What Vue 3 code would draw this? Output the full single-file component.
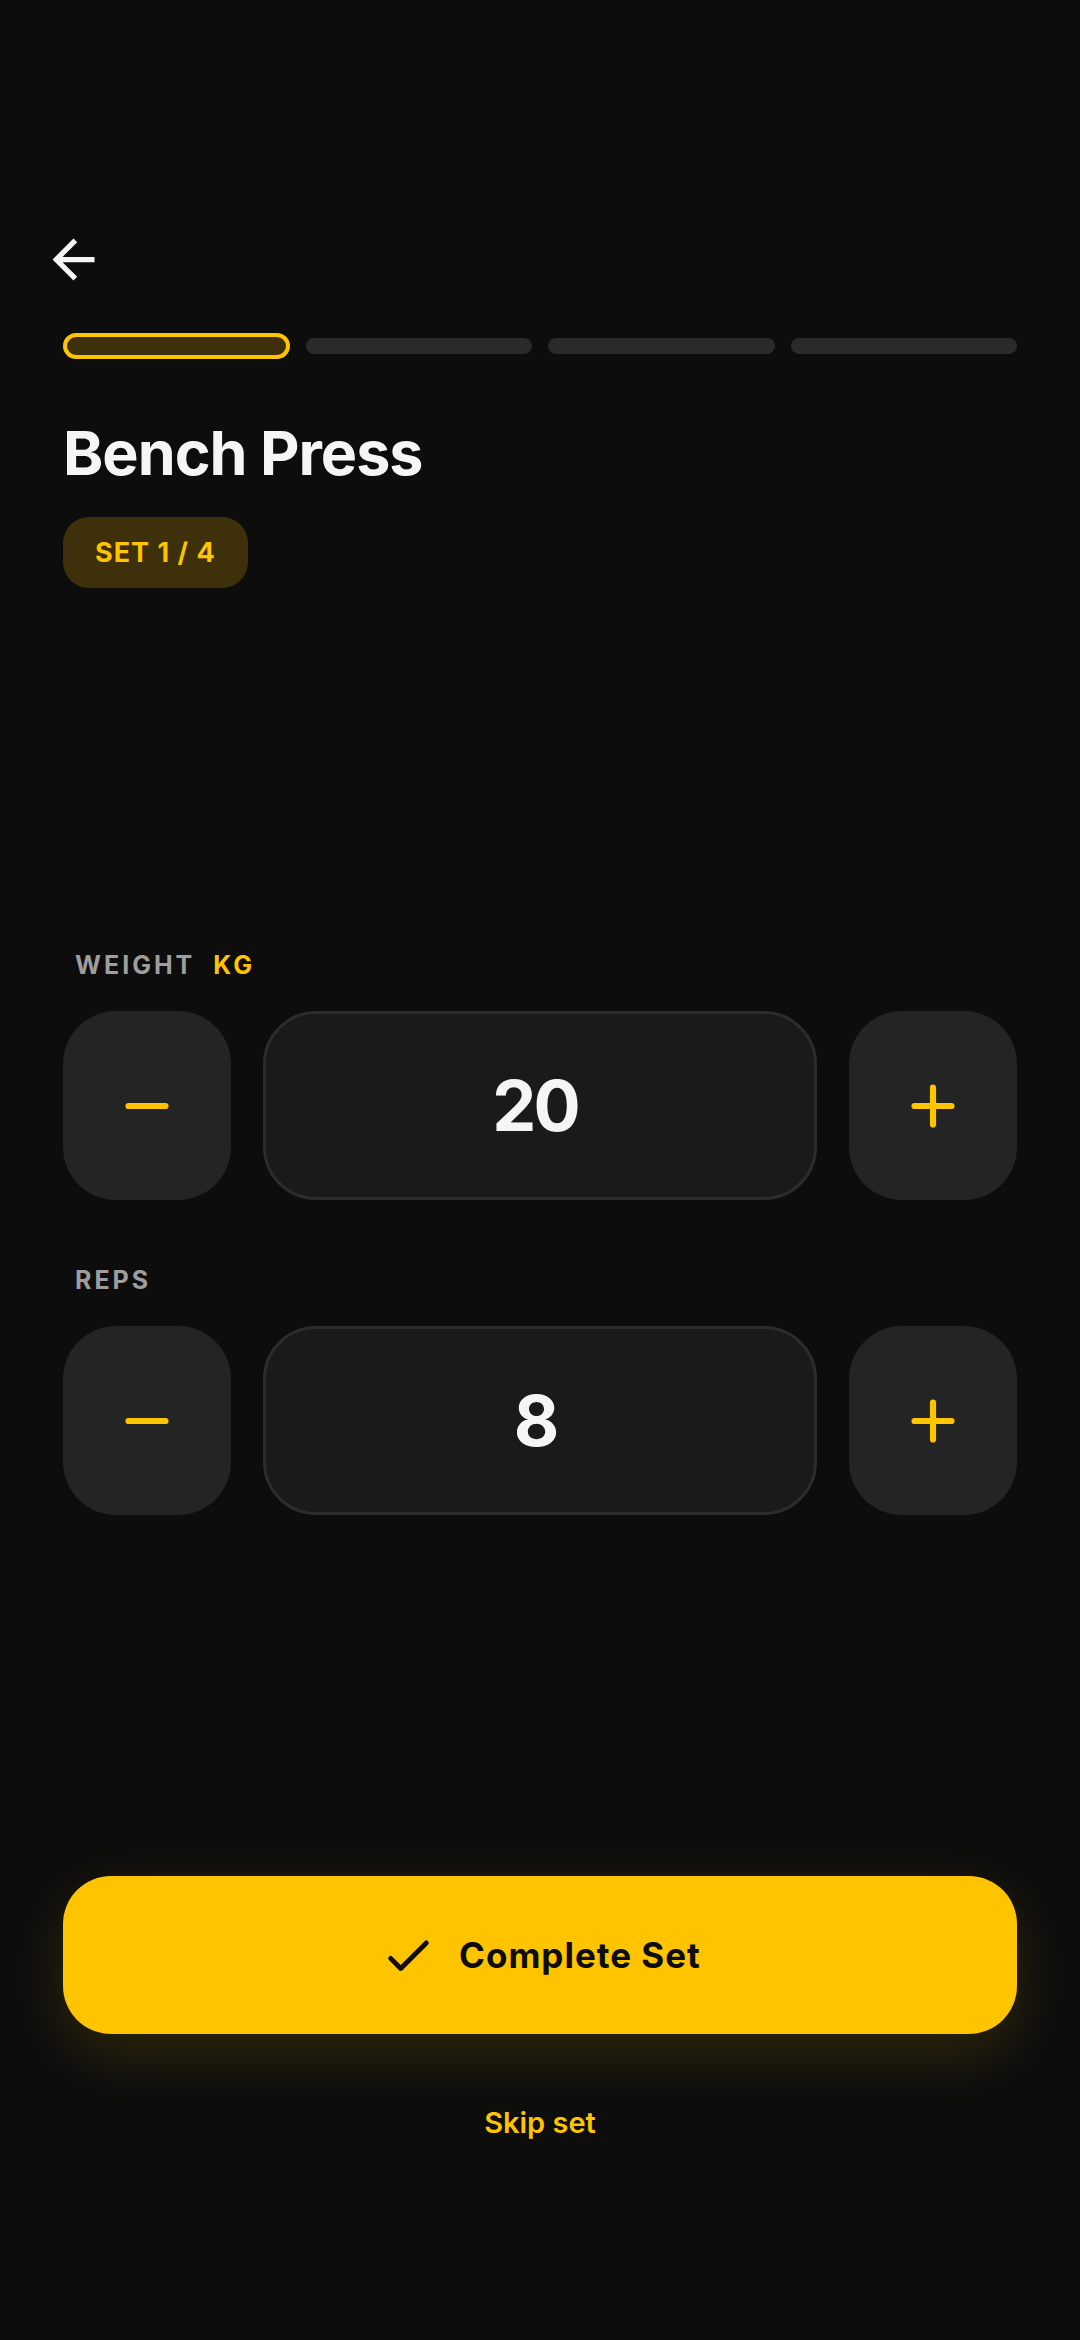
<script setup>
import { ref, reactive } from 'vue'

const totalSets = 4
const currentSet = ref(1)
const fields = reactive([
  { id: 'weight', label: 'WEIGHT', unit: 'KG', value: 20, step: 5 },
  { id: 'reps', label: 'REPS', unit: '', value: 8, step: 1 }
])

function change(field, direction) {
  field.value = Math.max(0, Number(field.value) + direction * field.step)
}

function nextSet() {
  if (currentSet.value < totalSets) currentSet.value++
}
</script>

<template>
  <div class="screen">
    <header>
      <button class="back" type="button" aria-label="Back">
        <svg viewBox="0 0 24 24" aria-hidden="true">
          <path d="M20 11H7.83l5.59-5.59L12 4l-8 8 8 8 1.41-1.41L7.83 13H20z" />
        </svg>
      </button>
      <div class="progress" aria-hidden="true">
        <span
          v-for="n in totalSets"
          :key="n"
          class="segment"
          :class="{ active: n === currentSet }"
        ></span>
      </div>
      <h1>Bench Press</h1>
      <p class="badge">SET {{ currentSet }} / {{ totalSets }}</p>
    </header>

    <main>
      <section v-for="field in fields" :key="field.id" class="field">
        <label :for="field.id">
          <span>{{ field.label }}</span>
          <span v-if="field.unit" class="unit">{{ field.unit }}</span>
        </label>
        <div class="stepper">
          <button class="step" type="button" :aria-label="'Decrease ' + field.id" @click="change(field, -1)">
            <svg viewBox="0 0 24 24" aria-hidden="true"><path d="M6 12h12" /></svg>
          </button>
          <input :id="field.id" v-model="field.value" type="text" inputmode="decimal" />
          <button class="step" type="button" :aria-label="'Increase ' + field.id" @click="change(field, 1)">
            <svg viewBox="0 0 24 24" aria-hidden="true"><path d="M6 12h12M12 6v12" /></svg>
          </button>
        </div>
      </section>
    </main>

    <footer>
      <button class="complete" type="button" @click="nextSet">
        <svg viewBox="0 0 24 24" aria-hidden="true">
          <path d="M9 16.17 5.53 12.7a.996.996 0 1 0-1.41 1.41l4.18 4.18c.39.39 1.02.39 1.41 0L20.29 7.71a.996.996 0 1 0-1.41-1.41z" />
        </svg>
        <span>Complete Set</span>
      </button>
      <button class="skip" type="button" @click="nextSet">Skip set</button>
    </footer>
  </div>
</template>

<style>
body {
  margin: 0;
  background: #0d0d0d;
}
</style>

<style scoped>
.screen {
  box-sizing: border-box;
  min-height: 100vh;
  padding: 228px 63px 176px;
  display: flex;
  flex-direction: column;
  background: #0d0d0d;
  color: #f5f5f5;
  font-family: Inter, "Liberation Sans", sans-serif;
}

button {
  padding: 0;
  border: 0;
  background: none;
  font-family: inherit;
  cursor: pointer;
}

svg {
  display: block;
}

header {
  display: flex;
  flex-direction: column;
  align-items: flex-start;
}

.back {
  margin-left: -21px;
}

.back svg {
  width: 63px;
  height: 63px;
  fill: #f5f5f5;
}

.progress {
  align-self: stretch;
  display: grid;
  grid-template-columns: repeat(4, 1fr);
  align-items: center;
  gap: 16px;
  margin-top: 42px;
}

.segment {
  box-sizing: border-box;
  height: 16px;
  border-radius: 8px;
  background: #2a2a2a;
}

.segment.active {
  height: 26px;
  border: 4px solid #ffc400;
  border-radius: 13px;
  background: #3d300b;
}

h1 {
  margin: 58px 0 0;
  font-size: 61px;
  line-height: 72px;
  font-weight: 700;
  letter-spacing: -1px;
}

.badge {
  margin: 28px 0 0;
  padding: 0 32px;
  border-radius: 26px;
  background: #3d300b;
  color: #ffc400;
  font-size: 27px;
  line-height: 71px;
  font-weight: 700;
  letter-spacing: 1px;
}

main {
  flex: 1;
  display: flex;
  flex-direction: column;
  justify-content: center;
  gap: 64px;
}

label {
  display: flex;
  gap: 18px;
  margin: 0 12px 30px;
  color: #9e9e9e;
  font-size: 25px;
  line-height: 32px;
  font-weight: 700;
  letter-spacing: 3px;
}

.unit {
  color: #ffc400;
}

.stepper {
  display: flex;
  gap: 32px;
  height: 189px;
}

.step {
  flex: none;
  width: 168px;
  display: flex;
  align-items: center;
  justify-content: center;
  border-radius: 53px;
  background: #242424;
}

.step svg {
  width: 74px;
  height: 74px;
  fill: none;
  stroke: #ffc400;
  stroke-width: 2;
  stroke-linecap: round;
}

input {
  box-sizing: border-box;
  flex: 1;
  min-width: 0;
  padding: 0 10px 0 0;
  border: 3px solid #2c2c2c;
  border-radius: 53px;
  outline: 0;
  background: #1a1a1a;
  color: #f5f5f5;
  font-family: inherit;
  font-size: 70px;
  font-weight: 700;
  letter-spacing: -3px;
  text-align: center;
}

footer {
  display: flex;
  flex-direction: column;
  align-items: center;
  gap: 46px;
}

.complete {
  align-self: stretch;
  height: 158px;
  display: flex;
  align-items: center;
  justify-content: center;
  gap: 22px;
  border-radius: 48px;
  background: #ffc400;
  box-shadow: 0 20px 60px rgba(255, 196, 0, 0.14);
  color: #0d0d0d;
  font-size: 35px;
  font-weight: 700;
  letter-spacing: 1px;
}

.complete svg {
  width: 58px;
  height: 58px;
  fill: #0d0d0d;
}

.skip {
  height: 84px;
  color: #ffc400;
  font-size: 29px;
  font-weight: 600;
}
</style>
